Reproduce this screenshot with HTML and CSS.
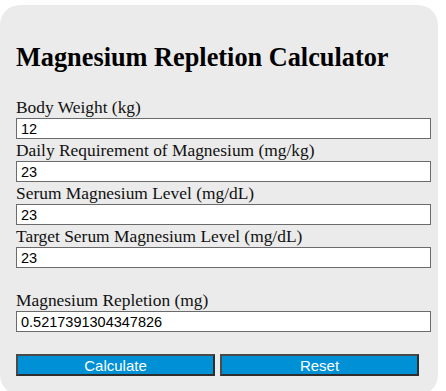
FILE: index.html
```html
<!DOCTYPE html>
<html>

<head>
    <title>Magnesium Repletion Calculator</title>
    <link rel="stylesheet" href="styles.css">
</head>

<body>
    <div class="calculator">
        <h2 class="title">Magnesium Repletion Calculator</h2>
        <label class="field-label" for="weight">Body Weight (kg)</label>
        <input class="field" type="text" id="weight" value="12" />
        <label class="field-label" for="requirement">Daily Requirement of Magnesium (mg/kg)</label>
        <input class="field" type="text" id="requirement" value="23" />
        <label class="field-label" for="serum">Serum Magnesium Level (mg/dL)</label>
        <input class="field" type="text" id="serum" value="23" />
        <label class="field-label" for="target">Target Serum Magnesium Level (mg/dL)</label>
        <input class="field" type="text" id="target" value="23" />

        <label class="field-label result-label" for="result">Magnesium Repletion (mg)</label>
        <input class="field" type="text" id="result" value="0.5217391304347826" />

        <div class="buttons">
            <button class="btn">Calculate</button>
            <button class="btn">Reset</button>
        </div>
    </div>
</body>

</html>
```

FILE: styles.css
```css
body {
    margin: 0;
    background: #fff;
    font-family: "Liberation Serif", "Times New Roman", serif;
}

.calculator {
    width: 438px;
    box-sizing: border-box;
    margin-top: 5px;
    padding: 16px 16px 19px 16px;
    background: #ebebeb;
    border-radius: 20px;
}

.title {
    margin: 23px 0 24px 0;
    font-size: 26.3px;
    font-weight: bold;
    line-height: 28px;
    color: #000;
}

.field-label {
    display: block;
    font-size: 17.4px;
    line-height: 22px;
    color: #111;
}

.result-label {
    margin-top: 21px;
}

.field {
    display: block;
    width: 100%;
    height: 17px;
    margin: 0;
    padding: 1px 3px 1px 4px;
    border: 1px solid #6b6b6b;
    background: #fff;
    font-family: "Liberation Sans", Arial, sans-serif;
    font-size: 14.5px;
    color: #000;
}

.buttons {
    display: flex;
    gap: 5px;
    margin-top: 22px;
}

.btn {
    width: 199px;
    height: 22px;
    padding: 0;
    border: 2px solid #2e2e2e;
    border-left-color: #4a4a4a;
    border-top-color: #4a4a4a;
    background: #0090d6;
    color: #fff;
    font-family: "Liberation Sans", Arial, sans-serif;
    font-size: 15px;
}
```
